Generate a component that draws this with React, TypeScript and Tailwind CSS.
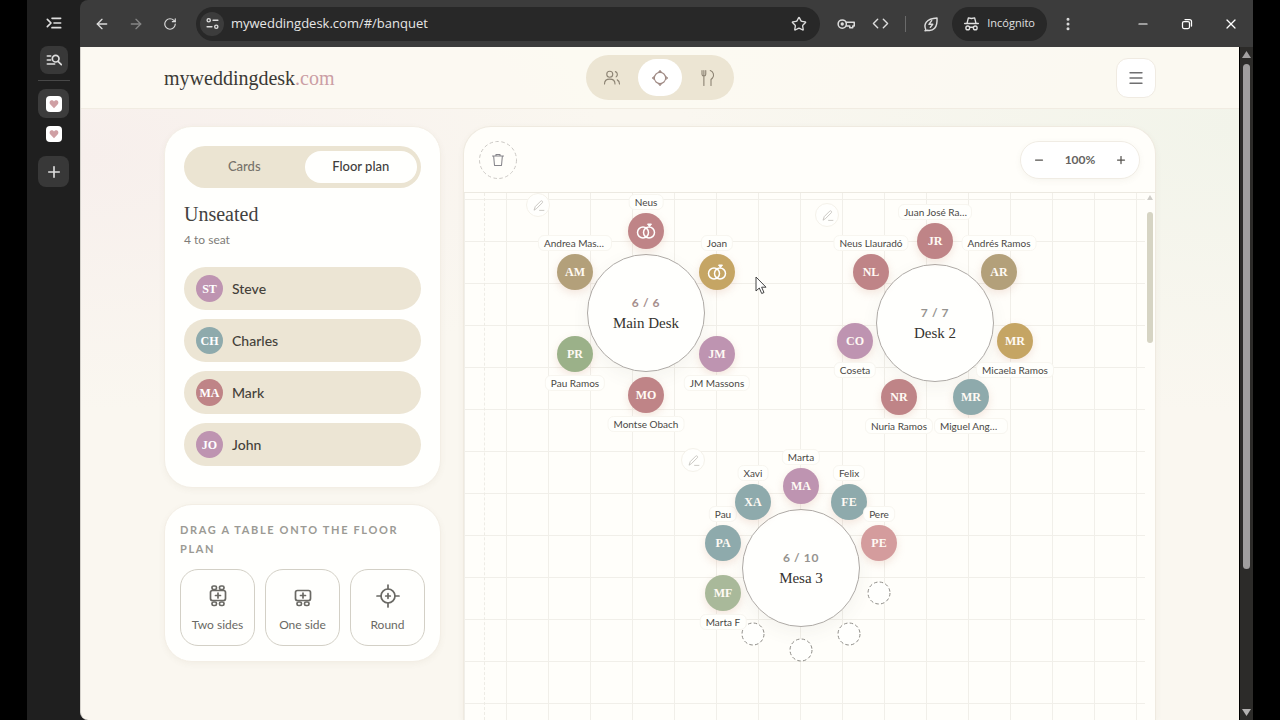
import type { ReactNode } from 'react';
import {
  ArrowLeft,
  ArrowRight,
  Code,
  EllipsisVertical,
  Menu,
  Minus,
  Plus,
  RotateCw,
  Star,
  X,
} from 'lucide-react';

type Guest = { initials: string; name: string; color: string; rings?: boolean };
type Table = { name: string; x: number; y: number; seats: (Guest | null)[]; full?: boolean };

const rose = 'bg-[#bf8487]';
const blush = 'bg-[#d49c9d]';
const sand = 'bg-[#b3a07a]';
const gold = 'bg-[#c5a564]';
const mauve = 'bg-[#be94b1]';
const teal = 'bg-[#8eaaac]';
const green = 'bg-[#9bb189]';
const sage = 'bg-[#a9b99a]';

const unseated: Guest[] = [
  { initials: 'ST', name: 'Steve', color: mauve },
  { initials: 'CH', name: 'Charles', color: teal },
  { initials: 'MA', name: 'Mark', color: rose },
  { initials: 'JO', name: 'John', color: mauve },
];

// seats go clockwise, starting at twelve o'clock
const tables: Table[] = [
  {
    name: 'Main Desk',
    x: 182,
    y: 120,
    full: true,
    seats: [
      { initials: 'NE', name: 'Neus', color: rose, rings: true },
      { initials: 'JO', name: 'Joan', color: gold, rings: true },
      { initials: 'JM', name: 'JM Massons', color: mauve },
      { initials: 'MO', name: 'Montse Obach', color: rose },
      { initials: 'PR', name: 'Pau Ramos', color: green },
      { initials: 'AM', name: 'Andrea Mas…', color: sand },
    ],
  },
  {
    name: 'Desk 2',
    x: 471,
    y: 130,
    seats: [
      { initials: 'JR', name: 'Juan José Ra…', color: rose },
      { initials: 'AR', name: 'Andrés Ramos', color: sand },
      { initials: 'MR', name: 'Micaela Ramos', color: gold },
      { initials: 'MR', name: 'Miguel Ang…', color: teal },
      { initials: 'NR', name: 'Nuria Ramos', color: rose },
      { initials: 'CO', name: 'Coseta', color: mauve },
      { initials: 'NL', name: 'Neus Llauradó', color: rose },
    ],
  },
  {
    name: 'Mesa 3',
    x: 337,
    y: 375,
    seats: [
      { initials: 'MA', name: 'Marta', color: mauve },
      { initials: 'FE', name: 'Felix', color: teal },
      { initials: 'PE', name: 'Pere', color: blush },
      null,
      null,
      null,
      null,
      { initials: 'MF', name: 'Marta F', color: sage },
      { initials: 'PA', name: 'Pau', color: teal },
      { initials: 'XA', name: 'Xavi', color: teal },
    ],
  },
];

const SEAT_RADIUS = 82;

function Svg({ size = 18, children, className = '' }: { size?: number; children: ReactNode; className?: string }) {
  return (
    <svg
      width={size}
      height={size}
      viewBox="0 0 24 24"
      fill="none"
      stroke="currentColor"
      strokeWidth="1.5"
      strokeLinecap="round"
      strokeLinejoin="round"
      className={className}
      aria-hidden="true"
    >
      {children}
    </svg>
  );
}

function HeartTab() {
  return (
    <span className="flex h-4 w-4 items-center justify-center rounded bg-white">
      <svg width="10" height="10" viewBox="0 0 10 10" fill="#cf9fa4" aria-hidden="true">
        <path d="M5 9.2 1.2 5.2C0 3.7.7 1.2 2.8 1.2c1 0 1.7.5 2.2 1.2.5-.7 1.200-1.200 2.200-1.200 2.100 0 2.800 2.500 1.600 4z" />
      </svg>
    </span>
  );
}

function SideStrip() {
  return (
    <aside className="flex w-[53px] shrink-0 flex-col items-center bg-[#1f1f1f] pt-3 text-[#dedede]">
      <button aria-label="Expand tabs" className="flex h-[22px] w-8 items-center justify-center">
        <Svg size={16}>
          <path strokeWidth="2.500" d="M2 6.500 7.500 12 2 17.500M9 5h13M12 12h10M9 19h13" />
        </Svg>
      </button>
      <button aria-label="Search tabs" className="mt-3 flex h-7 w-7 items-center justify-center rounded-lg bg-[#383838]">
        <Svg size={16}>
          <path strokeWidth="2.500" d="M2 6h5M2 12h5M2 18h11M18 14l5 5" />
          <circle strokeWidth="2.500" cx="14.500" cy="10" r="5" />
        </Svg>
      </button>
      <div className="mt-[6px] h-px w-8 bg-[#484848]" />
      <button aria-label="Current tab" className="mt-2 flex h-[29px] w-[31px] items-center justify-center rounded-lg bg-[#3c3c3c]">
        <HeartTab />
      </button>
      <button aria-label="Other tab" className="mt-2 flex">
        <HeartTab />
      </button>
      <button aria-label="New tab" className="mt-[14px] flex h-[31px] w-[31px] items-center justify-center rounded-lg bg-[#383838]">
        <Plus size={18} strokeWidth={2.200} />
      </button>
    </aside>
  );
}

function BrowserBar() {
  const button = 'flex h-8 w-[34px] shrink-0 items-center justify-center';
  return (
    <div className="flex h-[47px] shrink-0 items-center rounded-tl-lg bg-[#3c3c3c] pl-[5px] font-['Open_Sans',sans-serif] text-[#dcdcdc]">
      <button aria-label="Back" className={button}><ArrowLeft size={16} /></button>
      <button aria-label="Forward" className={`${button} text-[#858585]`}><ArrowRight size={16} /></button>
      <button aria-label="Reload" className={button}><RotateCw size={14} /></button>
      <div className="ml-[9px] flex h-[34px] min-w-0 flex-1 items-center rounded-full bg-[#282828] pr-[13px] pl-1">
        <button aria-label="Site information" className="flex h-6 w-6 items-center justify-center rounded-full bg-[#3c3c3c]">
          <Svg size={13}>
            <g strokeWidth="2.500">
              <circle cx="5" cy="6" r="3" />
              <path d="M13 6h9M2 18h9" />
              <circle cx="19" cy="18" r="3" />
            </g>
          </Svg>
        </button>
        <input
          aria-label="Address"
          readOnly
          value="myweddingdesk.com/#/banquet"
          className="ml-[7px] min-w-0 flex-1 bg-transparent text-[13px] text-[#e6e6e6] outline-none"
        />
        <button aria-label="Bookmark"><Star size={16} strokeWidth={2} /></button>
      </div>
      <button aria-label="Passwords" className={`${button} ml-[9px]`}>
        <Svg size={18}>
          <g strokeWidth="2">
            <path d="M12.500 9.500H23v5h-2V17h-4v-2.500h-4.500" />
            <circle cx="7" cy="12" r="5.500" />
            <circle cx="7" cy="12" r="1.200" fill="currentColor" />
          </g>
        </Svg>
      </button>
      <button aria-label="Developer tools" className={button}><Code size={17} /></button>
      <span className="mx-2 h-4 w-px bg-[#6a6a6a]" />
      <button aria-label="Energy saver" className={button}>
        <Svg size={16}>
          <g strokeWidth="2.200">
            <path d="M4 20c-3-7 0-16 17-17 1 15-6 20-14 18.500L3 22" />
            <path d="m13 7-4 5.500h5.500L11 17" />
          </g>
        </Svg>
      </button>
      <button className="ml-1 flex h-[34px] items-center gap-2 rounded-full bg-[#282828] px-3 text-[11px] text-[#e0e0e0]">
        <Svg size={15}>
          <g strokeWidth="2.200">
            <path d="M1 12h22M5 11l2-8 5 1 5-1 2 8M9 18h6" />
            <circle cx="6" cy="19" r="3" />
            <circle cx="18" cy="19" r="3" />
          </g>
        </Svg>
        Incógnito
      </button>
      <button aria-label="Menu" className={`${button} ml-1`}><EllipsisVertical size={16} strokeWidth={2.500} /></button>
      <div className="ml-9 flex text-white">
        <button aria-label="Minimise" className="flex h-8 w-11 items-center justify-center"><Minus size={14} strokeWidth={2} /></button>
        <button aria-label="Restore" className="flex h-8 w-11 items-center justify-center">
          <Svg size={12}>
            <g strokeWidth="2.500">
              <rect x="3" y="7" width="14" height="14" rx="3" />
              <path d="M8 3h9a4 4 0 0 1 4 4v9" />
            </g>
          </Svg>
        </button>
        <button aria-label="Close" className="flex h-8 w-11 items-center justify-center"><X size={16} strokeWidth={1.800} /></button>
      </div>
    </div>
  );
}

function Header() {
  return (
    <header className="border-b border-[#f1ece2] bg-[#fcf9f2]/90">
      <div className="mx-auto grid h-[61px] max-w-[992px] grid-cols-[1fr_auto_1fr] items-center">
        <a href="#/" className="font-['Liberation_Serif',serif] text-xl text-[#3b3935]">
          myweddingdesk<span className="text-[#cb9ea5]">.com</span>
        </a>
        <nav className="flex gap-1 rounded-full bg-[#ece5d3] p-1 text-[#8d8474]">
          <a href="#/guests" aria-label="Guests" className="flex h-[37px] w-11 items-center justify-center">
            <Svg>
              <circle cx="9" cy="7" r="4" />
              <path d="M2 20c0-4 2.500-6.500 7-6.500s7 2.500 7 6.500M16.500 3.500a4 4 0 0 1 1 7M19 14.500c2 1 3 3 3 5.500" />
            </Svg>
          </a>
          <a href="#/banquet" aria-label="Banquet" className="flex h-[37px] w-11 items-center justify-center rounded-full bg-white text-[#a08b85]">
            <Svg>
              <circle cx="12" cy="12" r="7.500" />
              <path d="m10 4.600 2-2.600 2 2.600M10 19.400l2 2.600 2-2.600M4.600 10 2 12l2.600 2M19.400 10l2.600 2-2.600 2" />
            </Svg>
          </a>
          <a href="#/menus" aria-label="Menus" className="flex h-[37px] w-11 items-center justify-center">
            <Svg>
              <path d="M4 2v5c0 1.500 1 2.500 2.500 2.500S9 8.500 9 7V2M6.500 2v20M16 22v-8M15 2c4 1 6 7 3 10l-2 2v8" />
            </Svg>
          </a>
        </nav>
        <button aria-label="Open menu" className="flex h-10 w-10 items-center justify-center justify-self-end rounded-xl border border-[#f0ebe2] bg-white text-[#6f6f70]">
          <Menu size={18} strokeWidth={1.800} />
        </button>
      </div>
    </header>
  );
}

function UnseatedCard() {
  return (
    <section className="rounded-[28px] border border-[#f3eee5] bg-[#fffffd] px-[19px] pt-[19px] pb-[21px] shadow-[0_2px_6px_rgba(120,100,70,0.06)]">
      <div className="flex gap-1 rounded-full bg-[#ebe4d2] px-1 py-[5px] text-[13px]">
        <button className="h-8 flex-1 rounded-full font-medium text-[#77726a]">Cards</button>
        <button className="h-8 flex-1 rounded-full bg-[#fffffd] font-medium text-[#3f3e3c]">Floor plan</button>
      </div>
      <h2 className="mt-[14px] font-['Liberation_Serif',serif] text-xl leading-6 text-[#43423f]">Unseated</h2>
      <p className="mt-1 text-xs leading-5 text-[#7e7c78]">4 to seat</p>
      <ul className="mt-[17px] flex flex-col gap-[9px]">
        {unseated.map((guest) => (
          <li key={guest.name} className="flex h-[43px] items-center gap-[9px] rounded-full bg-[#ece5d4] px-3 text-sm font-medium text-[#44413a]">
            <span className={`flex h-[27px] w-[27px] items-center justify-center rounded-full font-['Liberation_Serif',serif] text-xs font-bold text-white ${guest.color}`}>
              {guest.initials}
            </span>
            {guest.name}
          </li>
        ))}
      </ul>
    </section>
  );
}

function TableIcon({ kind }: { kind: string }) {
  if (kind === 'Round') {
    return (
      <Svg size={24}>
        <g strokeWidth="1.700">
          <circle cx="12" cy="12" r="7" />
          <path d="M12 1v4M12 19v4M1 12h4M19 12h4M12 9.700v4.600M9.700 12h4.600" />
        </g>
      </Svg>
    );
  }
  return (
    <Svg size={24}>
      <g strokeWidth="1.700">
        {kind === 'Two sides' && (
          <>
            <rect x="6" y="2" width="4.500" height="3.500" rx="1.500" />
            <rect x="13.500" y="2" width="4.500" height="3.500" rx="1.500" />
          </>
        )}
        <rect x="4.500" y="6.500" width="15" height="10" rx="2" />
        <rect x="6" y="18" width="4.500" height="3.500" rx="1.500" />
        <rect x="13.500" y="18" width="4.500" height="3.500" rx="1.500" />
        <path d="M12 9v5M9.500 11.500h5" />
      </g>
    </Svg>
  );
}

function PaletteCard() {
  return (
    <section className="rounded-[28px] border border-[#f3eee5] bg-[#fffffd] p-[15px] shadow-[0_2px_6px_rgba(120,100,70,0.06)]">
      <h3 className="text-[11px] leading-[19px] font-bold tracking-[0.15em] text-[#9b9a94] uppercase">
        Drag a table onto the floor plan
      </h3>
      <div className="mt-[11px] grid grid-cols-3 gap-[10px]">
        {['Two sides', 'One side', 'Round'].map((kind) => (
          <button key={kind} className="flex h-[77px] flex-col items-center justify-center gap-[7px] rounded-[18px] border border-[#d3d0c6] pt-[3px] text-xs leading-5 text-[#6a6964]">
            <TableIcon kind={kind} />
            {kind}
          </button>
        ))}
      </div>
    </section>
  );
}

function Rings() {
  return (
    <svg width="20" height="18" viewBox="0 0 20 18" fill="none" stroke="#fff" strokeWidth="1.500" aria-hidden="true">
      <circle cx="7" cy="10.500" r="5.500" />
      <circle cx="13" cy="10.500" r="5.500" />
      <path d="M11.500 2h4l-2 2.500z" fill="#fff" strokeWidth="1" />
    </svg>
  );
}

function Seat({ guest, angle }: { guest: Guest | null; angle: number }) {
  const left = Math.round(Math.cos(angle) * SEAT_RADIUS);
  const top = Math.round(Math.sin(angle) * SEAT_RADIUS);

  if (!guest) {
    return (
      <div className="absolute" style={{ left, top }}>
        <svg width="24" height="24" viewBox="0 0 24 24" className="-translate-x-1/2 -translate-y-1/2" aria-hidden="true">
          <circle cx="12" cy="12" r="11" fill="#fffffd" stroke="#8f8d88" strokeDasharray="3.500 2.300" />
        </svg>
      </div>
    );
  }

  const side = top < 0 ? 'bottom-[21px]' : 'top-[21px]';
  const clipped = guest.name.endsWith('…') ? 'w-[74px]' : '';
  return (
    <div className="absolute" style={{ left, top }}>
      <div className={`absolute flex h-9 w-9 -translate-x-1/2 -translate-y-1/2 items-center justify-center rounded-full font-['Liberation_Serif',serif] text-xs font-bold text-[#fffaf4] shadow-[0_3px_8px_rgba(200,140,120,0.22)] ${guest.color}`}>
        {guest.rings ? <Rings /> : guest.initials}
      </div>
      <div className={`absolute left-0 -translate-x-1/2 rounded-md border border-[#f8f6f0] bg-[#fffffc] px-[5px] text-[10px] leading-[14px] whitespace-nowrap text-[#4a4845] ${side} ${clipped}`}>
        {guest.name}
      </div>
    </div>
  );
}

function RoundTable({ table }: { table: Table }) {
  const taken = table.seats.filter(Boolean).length;
  return (
    <div className="absolute" style={{ left: table.x, top: table.y }}>
      <div className="absolute flex h-[118px] w-[118px] -translate-x-1/2 -translate-y-1/2 flex-col items-center justify-center rounded-full border border-[#aeaaa6] bg-[#fffffd] shadow-[0_6px_18px_rgba(90,80,60,0.06)]">
        <span className={`text-xs leading-5 font-bold tracking-wider ${table.full ? 'text-[#a58e8c]' : 'text-[#95938f]'}`}>
          {taken} / {table.seats.length}
        </span>
        <span className="font-['Liberation_Serif',serif] text-[15px] leading-5 text-[#35332f]">{table.name}</span>
      </div>
      {table.seats.map((guest, i) => (
        <Seat key={i} guest={guest} angle={(i / table.seats.length) * Math.PI * 2 - Math.PI / 2} />
      ))}
      <button
        aria-label={`Edit ${table.name}`}
        className="absolute -top-[120px] -left-[120px] flex h-6 w-6 items-center justify-center rounded-full border border-[#f5f2ea] bg-[#fffffd] text-[#bfbdb8]"
      >
        <Svg size={13}>
          <path d="M4 20 6 14 16 4c2-2 5 1 3 3L9 17zM14 21h8" />
        </Svg>
      </button>
    </div>
  );
}

function FloorPlan() {
  return (
    <section className="flex h-full min-w-0 flex-col overflow-hidden rounded-t-[28px] border border-b-0 border-[#efeae0] bg-[#fffefa] shadow-[0_2px_6px_rgba(120,100,70,0.06)]">
      <div className="flex h-[65px] shrink-0 items-center justify-between px-[15px]">
        <button aria-label="Remove table" className="relative flex h-[38px] w-[38px] items-center justify-center text-[#85848a]">
          <svg width="38" height="38" viewBox="0 0 38 38" fill="none" className="absolute inset-0" aria-hidden="true">
            <circle cx="19" cy="19" r="18.500" stroke="#cbc8c4" strokeDasharray="3.500 2.500" />
          </svg>
          <Svg size={14}>
            <path strokeWidth="1.800" d="M2.500 5h19M8.500 5V2.500h7V5M4.500 5 6 21.500h12L19.500 5" />
          </Svg>
        </button>
        <div className="flex h-[38px] w-[120px] items-center justify-between rounded-full border border-[#f0ece4] bg-white px-3 text-[#55534f] shadow-[0_2px_6px_rgba(120,100,70,0.06)]">
          <button aria-label="Zoom out"><Minus size={12} strokeWidth={2.500} /></button>
          <span className="text-xs font-bold text-[#65635f]">100%</span>
          <button aria-label="Zoom in"><Plus size={12} strokeWidth={2.500} /></button>
        </div>
      </div>
      <div className="flex min-h-0 flex-1 border-t border-[#ece9e1]">
        <div className="relative min-w-0 flex-1 overflow-hidden bg-[linear-gradient(to_right,#f1efe9_1px,transparent_1px),linear-gradient(to_bottom,#f1efe9_1px,transparent_1px)] bg-[size:42px_42px] bg-[position:0px_6px]">
          <div className="absolute inset-y-0 left-5 border-l border-dashed border-[#eeece5]" />
          {tables.map((table) => (
            <RoundTable key={table.name} table={table} />
          ))}
          <svg width="13" height="19" viewBox="0 0 13 19" className="absolute top-[83px] left-[291px]" aria-hidden="true">
            <path d="M1 1v14l3.300-3 2.400 5.500 2.300-1-2.400-5.300H11z" fill="#fff" stroke="#444" />
          </svg>
        </div>
        <div className="flex w-[10px] shrink-0 flex-col items-center pt-[2px]">
          <svg width="6" height="5" viewBox="0 0 6 5" fill="#cfcdc8" aria-hidden="true"><path d="m3 0 3 5H0z" /></svg>
          <div className="mt-3 h-1/4 w-[6px] rounded-full bg-[#d6d4c3]" />
        </div>
      </div>
    </section>
  );
}

function PageScrollbar() {
  return (
    <div className="flex w-[14px] shrink-0 flex-col items-center border-l border-black bg-[#2c2b29] py-[4px]">
      <svg width="9" height="7" viewBox="0 0 9 7" fill="#a3a1a1" aria-hidden="true"><path d="M4.500 0 9 7H0z" /></svg>
      <div className="min-h-0 w-full flex-1 px-[3px] py-[6px]">
        <div className="h-[79%] rounded-full bg-[#a09e9e]" />
      </div>
      <svg width="9" height="7" viewBox="0 0 9 7" fill="#b3b1b1" aria-hidden="true"><path d="M0 0h9L4.500 7z" /></svg>
    </div>
  );
}

export default function App() {
  return (
    <div className="flex h-screen overflow-hidden bg-black px-[27px] font-['Lato',sans-serif]">
      <SideStrip />
      <div className="flex min-w-0 flex-1 flex-col bg-[#1f1f1f]">
        <BrowserBar />
        <div className="flex min-h-0 flex-1">
          <div className="flex min-w-0 flex-1 flex-col overflow-hidden rounded-bl-lg border-l border-[#d5d2cc] bg-[#faf7f0] bg-[radial-gradient(ellipse_at_0%_16%,#f7efec_0%,transparent_32%),radial-gradient(ellipse_at_100%_12%,#f2f4ea_0%,transparent_34%)]">
            <Header />
            <main className="mx-auto grid min-h-0 w-full max-w-[992px] flex-1 grid-cols-[277px_minmax(0,1fr)] gap-[22px] pt-[17px]">
              <div className="flex flex-col gap-4">
                <UnseatedCard />
                <PaletteCard />
              </div>
              <FloorPlan />
            </main>
          </div>
          <PageScrollbar />
        </div>
      </div>
    </div>
  );
}
